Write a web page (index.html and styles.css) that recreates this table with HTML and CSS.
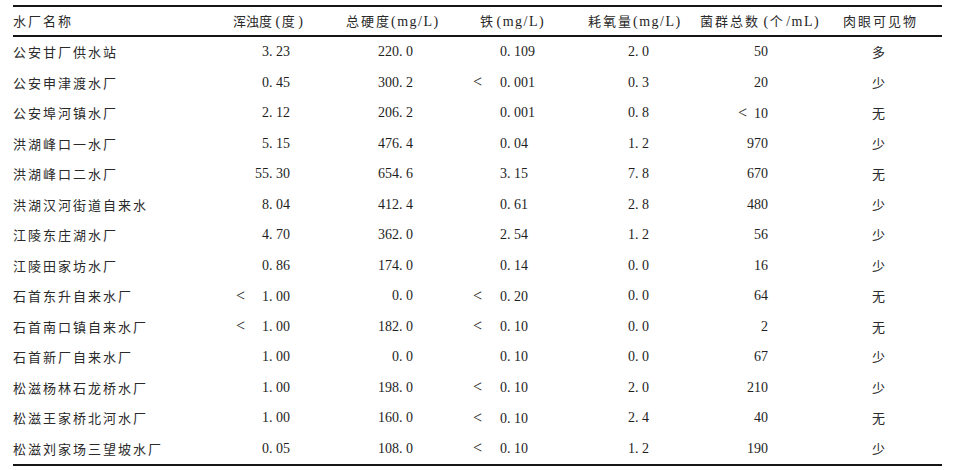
FILE: index.html
```html
<!DOCTYPE html>
<html lang="zh">
<head>
<meta charset="utf-8">
<link rel="stylesheet" href="styles.css">
</head>
<body>
<div class="sheet">
<div class="rule"></div>
<div class="row head">
  <div class="c1"><span class="zh sp">水厂名称</span></div>
  <div class="c2"><span class="zh">浑浊度</span> <span class="lat">(</span><span class="zh">度</span> <span class="lat">)</span></div>
  <div class="c3"><span class="zh sp">总硬度</span><span class="lat">(mg/L)</span></div>
  <div class="c4"><span class="zh">铁</span> <span class="lat">(mg/L)</span></div>
  <div class="c5"><span class="zh sp">耗氧量</span><span class="lat">(mg/L)</span></div>
  <div class="c6"><span class="zh sp">菌群总数</span> <span class="lat">(</span><span class="zh">个</span> <span class="lat">/mL)</span></div>
  <div class="c7"><span class="zh sp">肉眼可见物</span></div>
</div>
<div class="rule"></div>
<div class="body">
  <div class="row"><div class="c1 zh sp">公安甘厂供水站</div><div class="c2">3. 23</div><div class="c3">220. 0</div><div class="c4">0. 109</div><div class="c5">2. 0</div><div class="c6">50</div><div class="c7 zh">多</div></div>
  <div class="row"><div class="c1 zh sp">公安申津渡水厂</div><div class="c2">0. 45</div><div class="c3">300. 2</div><div class="c4"><span class="lt4">&lt;</span>0. 001</div><div class="c5">0. 3</div><div class="c6">20</div><div class="c7 zh">少</div></div>
  <div class="row"><div class="c1 zh sp">公安埠河镇水厂</div><div class="c2">2. 12</div><div class="c3">206. 2</div><div class="c4">0. 001</div><div class="c5">0. 8</div><div class="c6"><span class="lt6">&lt;</span>10</div><div class="c7 zh">无</div></div>
  <div class="row"><div class="c1 zh sp">洪湖峰口一水厂</div><div class="c2">5. 15</div><div class="c3">476. 4</div><div class="c4">0. 04</div><div class="c5">1. 2</div><div class="c6">970</div><div class="c7 zh">少</div></div>
  <div class="row"><div class="c1 zh sp">洪湖峰口二水厂</div><div class="c2">55. 30</div><div class="c3">654. 6</div><div class="c4">3. 15</div><div class="c5">7. 8</div><div class="c6">670</div><div class="c7 zh">无</div></div>
  <div class="row"><div class="c1 zh sp">洪湖汉河街道自来水</div><div class="c2">8. 04</div><div class="c3">412. 4</div><div class="c4">0. 61</div><div class="c5">2. 8</div><div class="c6">480</div><div class="c7 zh">少</div></div>
  <div class="row"><div class="c1 zh sp">江陵东庄湖水厂</div><div class="c2">4. 70</div><div class="c3">362. 0</div><div class="c4">2. 54</div><div class="c5">1. 2</div><div class="c6">56</div><div class="c7 zh">少</div></div>
  <div class="row"><div class="c1 zh sp">江陵田家坊水厂</div><div class="c2">0. 86</div><div class="c3">174. 0</div><div class="c4">0. 14</div><div class="c5">0. 0</div><div class="c6">16</div><div class="c7 zh">少</div></div>
  <div class="row"><div class="c1 zh sp">石首东升自来水厂</div><div class="c2"><span class="lt2">&lt;</span>1. 00</div><div class="c3">0. 0</div><div class="c4"><span class="lt4">&lt;</span>0. 20</div><div class="c5">0. 0</div><div class="c6">64</div><div class="c7 zh">无</div></div>
  <div class="row"><div class="c1 zh sp">石首南口镇自来水厂</div><div class="c2"><span class="lt2">&lt;</span>1. 00</div><div class="c3">182. 0</div><div class="c4"><span class="lt4">&lt;</span>0. 10</div><div class="c5">0. 0</div><div class="c6">2</div><div class="c7 zh">无</div></div>
  <div class="row"><div class="c1 zh sp">石首新厂自来水厂</div><div class="c2">1. 00</div><div class="c3">0. 0</div><div class="c4">0. 10</div><div class="c5">0. 0</div><div class="c6">67</div><div class="c7 zh">少</div></div>
  <div class="row"><div class="c1 zh sp">松滋杨林石龙桥水厂</div><div class="c2">1. 00</div><div class="c3">198. 0</div><div class="c4"><span class="lt4">&lt;</span>0. 10</div><div class="c5">2. 0</div><div class="c6">210</div><div class="c7 zh">少</div></div>
  <div class="row"><div class="c1 zh sp">松滋王家桥北河水厂</div><div class="c2">1. 00</div><div class="c3">160. 0</div><div class="c4"><span class="lt4">&lt;</span>0. 10</div><div class="c5">2. 4</div><div class="c6">40</div><div class="c7 zh">无</div></div>
  <div class="row"><div class="c1 zh sp">松滋刘家场三望坡水厂</div><div class="c2">0. 05</div><div class="c3">108. 0</div><div class="c4"><span class="lt4">&lt;</span>0. 10</div><div class="c5">1. 2</div><div class="c6">190</div><div class="c7 zh">少</div></div>
</div>
<div class="rule"></div>
</div>
</body>
</html>
```

FILE: styles.css
```css
html, body {
  margin: 0;
  padding: 0;
  background: #ffffff;
}

body {
  font-family: "Liberation Serif", "Noto Sans CJK SC", serif;
  font-size: 14px;
  color: #1e1e1e;
}

.sheet {
  width: 929px;
  margin: 5px 0 0 13px;
  display: flex;
  flex-direction: column;
}

.rule {
  height: 2px;
  background-color: #161616;
  flex: none;
}

.row {
  display: grid;
  grid-template-columns: 207px 115px 125px 115px 115px 140px 112px;
  align-items: center;
  height: 30.5px;
  white-space: nowrap;
  line-height: 16px;
}

.row.head {
  height: 28px;
}

.body {
  padding-top: 0;
}

.zh {
  font-family: "Noto Sans CJK SC", sans-serif;
  font-size: 13px;
  color: #2a2a2a;
}

.sp {
  letter-spacing: 2px;
}

.lat {
  letter-spacing: 1.5px;
}

.head > div { text-align: left; }
.head .c2 { padding-left: 13px; }
.head .c3 { padding-left: 11px; }
.head .c4 { padding-left: 20px; }
.head .c5 { padding-left: 13px; }
.head .c6 { padding-left: 10px; }
.head .c7 { padding-left: 13px; }

.body .c2 { text-align: right; padding-right: 45px; }
.body .c3 { text-align: right; padding-right: 47px; }
.body .c4 { text-align: left; padding-left: 40px; }
.body .c5 { text-align: left; padding-left: 53px; }
.body .c6 { text-align: right; padding-right: 62px; }
.body .c7 { text-align: left; padding-left: 42px; }

.lt2,
.lt4,
.lt6 {
  display: inline-block;
  text-align: left;
  font-size: 16px;
}

.lt2 { width: 26px; }

.lt4 {
  width: 27px;
  margin-left: -27px;
}

.lt6 { width: 16px; }
```
